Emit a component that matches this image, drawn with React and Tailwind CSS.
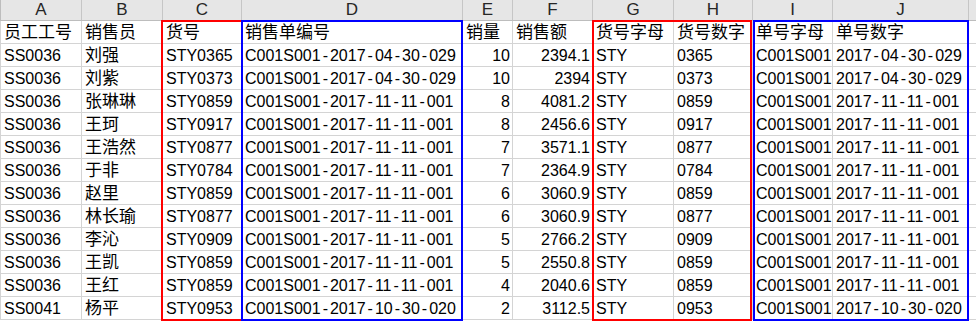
import React from "react";

const cols = [
  { key: "A", w: "w-[81px]" },
  { key: "B", w: "w-[81px]" },
  { key: "C", w: "w-[79px]" },
  { key: "D", w: "w-[221px]" },
  { key: "E", w: "w-[50px]" },
  { key: "F", w: "w-[80px]" },
  { key: "G", w: "w-[81px]" },
  { key: "H", w: "w-[79px]" },
  { key: "I", w: "w-[80px]" },
  { key: "J", w: "w-[136px]" },
];

const titles = ["员工工号", "销售员", "货号", "销售单编号", "销量", "销售额", "货号字母", "货号数字", "单号字母", "单号数字"];

const data = [
  ["SS0036", "刘强", "0365", "2017-04-30-029", "10", "2394.1"],
  ["SS0036", "刘紫", "0373", "2017-04-30-029", "10", "2394"],
  ["SS0036", "张琳琳", "0859", "2017-11-11-001", "8", "4081.2"],
  ["SS0036", "王珂", "0917", "2017-11-11-001", "8", "2456.6"],
  ["SS0036", "王浩然", "0877", "2017-11-11-001", "7", "3571.1"],
  ["SS0036", "于非", "0784", "2017-11-11-001", "7", "2364.9"],
  ["SS0036", "赵里", "0859", "2017-11-11-001", "6", "3060.9"],
  ["SS0036", "林长瑜", "0877", "2017-11-11-001", "6", "3060.9"],
  ["SS0036", "李沁", "0909", "2017-11-11-001", "5", "2766.2"],
  ["SS0036", "王凯", "0859", "2017-11-11-001", "5", "2550.8"],
  ["SS0036", "王红", "0859", "2017-11-11-001", "4", "2040.6"],
  ["SS0041", "杨平", "0953", "2017-10-30-020", "2", "3112.5"],
];

// turn a short row into the ten cell values
const expand = ([id, name, num, date, qty, amt]) => [
  id,
  name,
  "STY" + num,
  "C001S001-" + date,
  qty,
  amt,
  "STY",
  num,
  "C001S001",
  date,
];

// the sheet font draws its hyphens wider than Arial, so pad them a little
const Dashed = ({ text }) => {
  const parts = text.split("-");
  return parts.map((p, i) => (
    <React.Fragment key={i}>
      {i > 0 && <span className="px-[2px]">-</span>}
      {p}
    </React.Fragment>
  ));
};

const Cell = ({ w, right, cjk, children }) => (
  <div className={`${w} shrink-0 h-full border-r border-[#d4d4d4] flex items-end overflow-hidden whitespace-nowrap ${right ? "justify-end pr-[2px]" : "pl-[3px]"}`}>
    <span className={`${cjk ? "text-[17px]" : "text-[16px]"} leading-[19px] pb-[1px]`}>
      {typeof children === "string" && children.includes("-") ? <Dashed text={children} /> : children}
    </span>
  </div>
);

export default function App() {
  return (
    <div className="relative w-[976px] h-[323px] overflow-hidden bg-white text-black font-['Liberation_Sans','Noto_Sans_CJK_SC',sans-serif]">
      {/* column letters */}
      <div className="flex h-[21px] bg-[#e6e6e6] border-b border-[#bdbdbd] border-l">
        {cols.map((c) => (
          <div key={c.key} className={`${c.w} shrink-0 border-r border-[#c6c6c6] flex items-center justify-center text-[17px] leading-[20px] text-[#262626]`}>
            {c.key}
          </div>
        ))}
        <div className="flex-1" />
      </div>

      {/* title row */}
      <div className="flex h-[23px] border-b border-l border-[#d4d4d4]">
        {cols.map((c, i) => (
          <Cell key={c.key} w={c.w} cjk>
            {titles[i]}
          </Cell>
        ))}
        <div className="flex-1" />
      </div>

      {data.map((r, ri) => (
        <div key={ri} className="flex h-[23px] border-b border-l border-[#d4d4d4]">
          {expand(r).map((v, i) => (
            <Cell key={i} w={cols[i].w} right={i === 4 || i === 5} cjk={i === 1}>
              {v}
            </Cell>
          ))}
          <div className="flex-1" />
        </div>
      ))}

      {/* highlight outlines */}
      <div className="absolute left-[161px] top-[20px] w-[82px] h-[301px] border-2 border-[#ff0000] pointer-events-none" />
      <div className="absolute left-[241px] top-[20px] w-[222px] h-[301px] border-2 border-[#0000ff] pointer-events-none" />
      <div className="absolute left-[592px] top-[20px] w-[160px] h-[301px] border-2 border-[#ff0000] pointer-events-none" />
      <div className="absolute left-[753px] top-[20px] w-[216px] h-[301px] border-2 border-[#0000ff] pointer-events-none" />
    </div>
  );
}
